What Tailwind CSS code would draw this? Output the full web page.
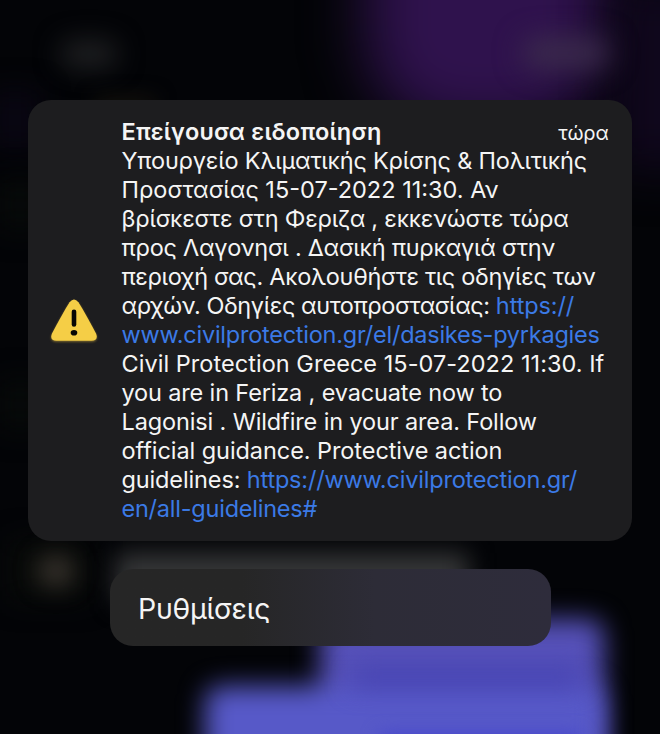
<!DOCTYPE html>
<html lang="el">
  <head>
    <meta charset="UTF-8" />
    <meta name="viewport" content="width=device-width, initial-scale=1.0" />
    <title>Επείγουσα ειδοποίηση</title>
    <script src="https://cdn.jsdelivr.net/npm/@tailwindcss/browser@4"></script>
  </head>
  <body
    class="relative h-[734px] w-[660px] overflow-hidden bg-[#030407] font-['Inter',sans-serif] text-[#f5f5f5]"
  >
    <!-- Blurred wallpaper -->
    <div class="absolute inset-0 overflow-hidden">
      <div class="absolute -top-[170px] left-[366px] h-[300px] w-[242px] rounded-[90px] bg-[#2f124d] blur-[30px]"></div>
      <div class="absolute -top-[20px] left-[615px] h-[190px] w-[90px] bg-[#10071d] blur-[24px]"></div>
      <div class="absolute top-[40px] left-[60px] h-[28px] w-[58px] rounded-full bg-[#1e1f21] blur-[13px]"></div>
      <div class="absolute top-[38px] left-[522px] h-[30px] w-[88px] rounded-full bg-[#3b2b4c] blur-[14px]"></div>
      <div class="absolute top-[98px] left-[95px] h-[14px] w-[60px] bg-[#16130c] blur-[10px]"></div>
      <div class="absolute top-[90px] -left-[10px] h-[60px] w-[50px] bg-[#090612] blur-[14px]"></div>
      <div class="absolute top-[180px] left-0 h-[50px] w-[40px] bg-[#070a09] blur-[14px]"></div>
      <div class="absolute top-[380px] left-0 h-[50px] w-[40px] bg-[#070a09] blur-[14px]"></div>
      <div class="absolute top-[540px] left-[10px] h-[60px] w-[80px] bg-[#090b09] blur-[14px]"></div>
      <div class="absolute top-[554px] left-[37px] h-[34px] w-[38px] rounded-full bg-[#312d28] blur-[11px]"></div>
      <div class="absolute top-[553px] left-[116px] h-[50px] w-[352px] bg-[#363738] blur-[12px]"></div>
      <div class="absolute top-[619px] left-[320px] h-[160px] w-[284px] rounded-2xl bg-[#5651b9] blur-[13px]"></div>
      <div class="absolute top-[686px] left-[205px] h-[100px] w-[398px] rounded-2xl bg-[#5759c8] blur-[13px]"></div>
      <div class="absolute top-[668px] left-[352px] h-[18px] w-[230px] bg-[#4341b1] blur-[13px]"></div>
      <div class="absolute top-[734px] left-[380px] h-[20px] w-[200px] bg-[#4545cc] blur-[9px]"></div>
    </div>

    <main class="relative pt-[100px]">
      <!-- Notification card -->
      <section class="ml-7 flex h-[441px] w-[604px] rounded-[23px] bg-[#1d1d1f]">
        <div class="flex w-[93.5px] shrink-0 items-center justify-center pt-[3px] pr-[2px]">
          <svg class="h-[50px] w-[54px] drop-shadow-[0_1px_1px_#806c2e]" viewBox="0 0 54 50">
            <path
              d="M22.6 5.2Q27 0 31.4 5.2Q36 12 49 36.4C51 41 49 43.8 44.6 43.8H9.4C5 43.8 3 41 5 36.4Q18 12 22.6 5.2Z"
              fill="#f5ce46"
            />
            <path d="M27 14.8V27.4" stroke="#080704" stroke-width="4.6" stroke-linecap="round" />
            <ellipse cx="27" cy="35.8" rx="3.3" ry="2.8" fill="#080704" />
          </svg>
        </div>

        <div class="w-[487px] shrink-0 pt-[17px] text-[23.5px] leading-[29px] whitespace-nowrap">
          <div class="flex h-[29px] items-baseline justify-between">
            <h1 class="font-semibold tracking-[0.2px]">Επείγουσα ειδοποίηση</h1>
            <span class="text-[20px] tracking-[-0.2px]">τώρα</span>
          </div>
          <p>
            <span class="block tracking-[-0.2px]">Υπουργείο Κλιματικής Κρίσης &amp; Πολιτικής</span>
            <span class="block">Προστασίας 15-07-2022 11:30. Αν</span>
            <span class="block tracking-[-0.24px]">βρίσκεστε στη Φεριζα , εκκενώστε τώρα</span>
            <span class="block tracking-[-0.24px]">προς Λαγονησι . Δασική πυρκαγιά στην</span>
            <span class="block tracking-[-0.3px]">περιοχή σας. Ακολουθήστε τις οδηγίες των</span>
            <span class="block tracking-[-0.42px]">αρχών. Οδηγίες αυτοπροστασίας: <a class="tracking-[-0.12px] text-[#3b7ae6]">https://</a></span>
            <span class="block tracking-[-0.24px]"><a class="text-[#3b7ae6]">www.civilprotection.gr/el/dasikes-pyrkagies</a></span>
            <span class="block tracking-[0.04px]">Civil Protection Greece 15-07-2022 11:30. If</span>
            <span class="block tracking-[-0.15px]">you are in Feriza , evacuate now to</span>
            <span class="block tracking-[-0.13px]">Lagonisi . Wildfire in your area. Follow</span>
            <span class="block tracking-[-0.07px]">official guidance. Protective action</span>
            <span class="block tracking-[-0.13px]">guidelines: <a class="tracking-[-0.19px] text-[#3b7ae6]">https://www.civilprotection.gr/</a></span>
            <span class="block tracking-[-0.23px]"><a class="text-[#3b7ae6]">en/all-guidelines#</a></span>
          </p>
        </div>
      </section>

      <!-- Settings action -->
      <button
        class="mt-7 ml-[110px] flex h-[77px] w-[441px] items-center rounded-[23px] bg-linear-to-r from-[#262626] from-30% via-[#2d2c37] via-60% to-[#2e2c3b] pt-[3px] pl-7 text-[28.5px] tracking-[-0.25px]"
      >
        Ρυθμίσεις
      </button>
    </main>
  </body>
</html>
